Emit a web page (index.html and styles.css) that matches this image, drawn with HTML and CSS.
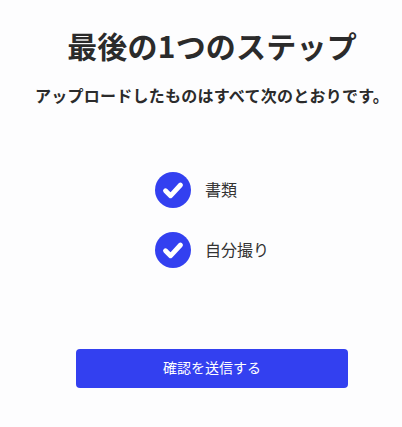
FILE: index.html
```html
<!DOCTYPE html>
<html lang="ja">
<head>
<meta charset="utf-8">
<title>最後の1つのステップ</title>
<link rel="stylesheet" href="styles.css">
</head>
<body>
<main class="page">
  <h1 class="title">最後の1つのステップ</h1>
  <p class="subtitle">アップロードしたものはすべて次のとおりです。</p>
  <ul class="checks">
    <li class="check">
      <svg class="check-icon" viewBox="0 0 36 36"><circle cx="18" cy="18" r="18" fill="#3340f0"/><path d="M10.5 18.8l5 5L25.5 13" fill="none" stroke="#fff" stroke-width="4.8" stroke-linecap="round" stroke-linejoin="round"/></svg>
      <span class="check-label">書類</span>
    </li>
    <li class="check">
      <svg class="check-icon" viewBox="0 0 36 36"><circle cx="18" cy="18" r="18" fill="#3340f0"/><path d="M10.5 18.8l5 5L25.5 13" fill="none" stroke="#fff" stroke-width="4.8" stroke-linecap="round" stroke-linejoin="round"/></svg>
      <span class="check-label">自分撮り</span>
    </li>
  </ul>
  <button class="submit" type="button">確認を送信する</button>
</main>
</body>
</html>
```
FILE: styles.css
```css
html, body { margin: 0; padding: 0; background: #fdfdfe; }
body { font-family: "Noto Sans CJK JP", "Noto Sans", sans-serif; color: #2b2b2b; }
.page { box-sizing: border-box; width: 402px; height: 427px; padding-left: 22px; display: flex; flex-direction: column; align-items: center; overflow: hidden; }
.title { margin: 23px 0 0; font-size: 30px; line-height: 44px; font-weight: 700; letter-spacing: 0.2px; }
.subtitle { margin: 16px 0 0; font-size: 16px; line-height: 24px; font-weight: 700; letter-spacing: 0.25px; }
.checks { list-style: none; margin: 65px 0 0; padding: 0; display: flex; flex-direction: column; gap: 24px; width: 114px; }
.check { display: flex; align-items: center; gap: 14px; font-size: 16px; color: #333; }
.check-label { padding-bottom: 3px; }
.check-icon { width: 36px; height: 36px; flex: none; }
.submit { margin-top: 81px; padding: 0 0 3px; width: 272px; height: 39px; border: 0; border-radius: 4px; background: #3340f0; color: #fff; font: 400 14px "Noto Sans CJK JP", sans-serif; }
```
